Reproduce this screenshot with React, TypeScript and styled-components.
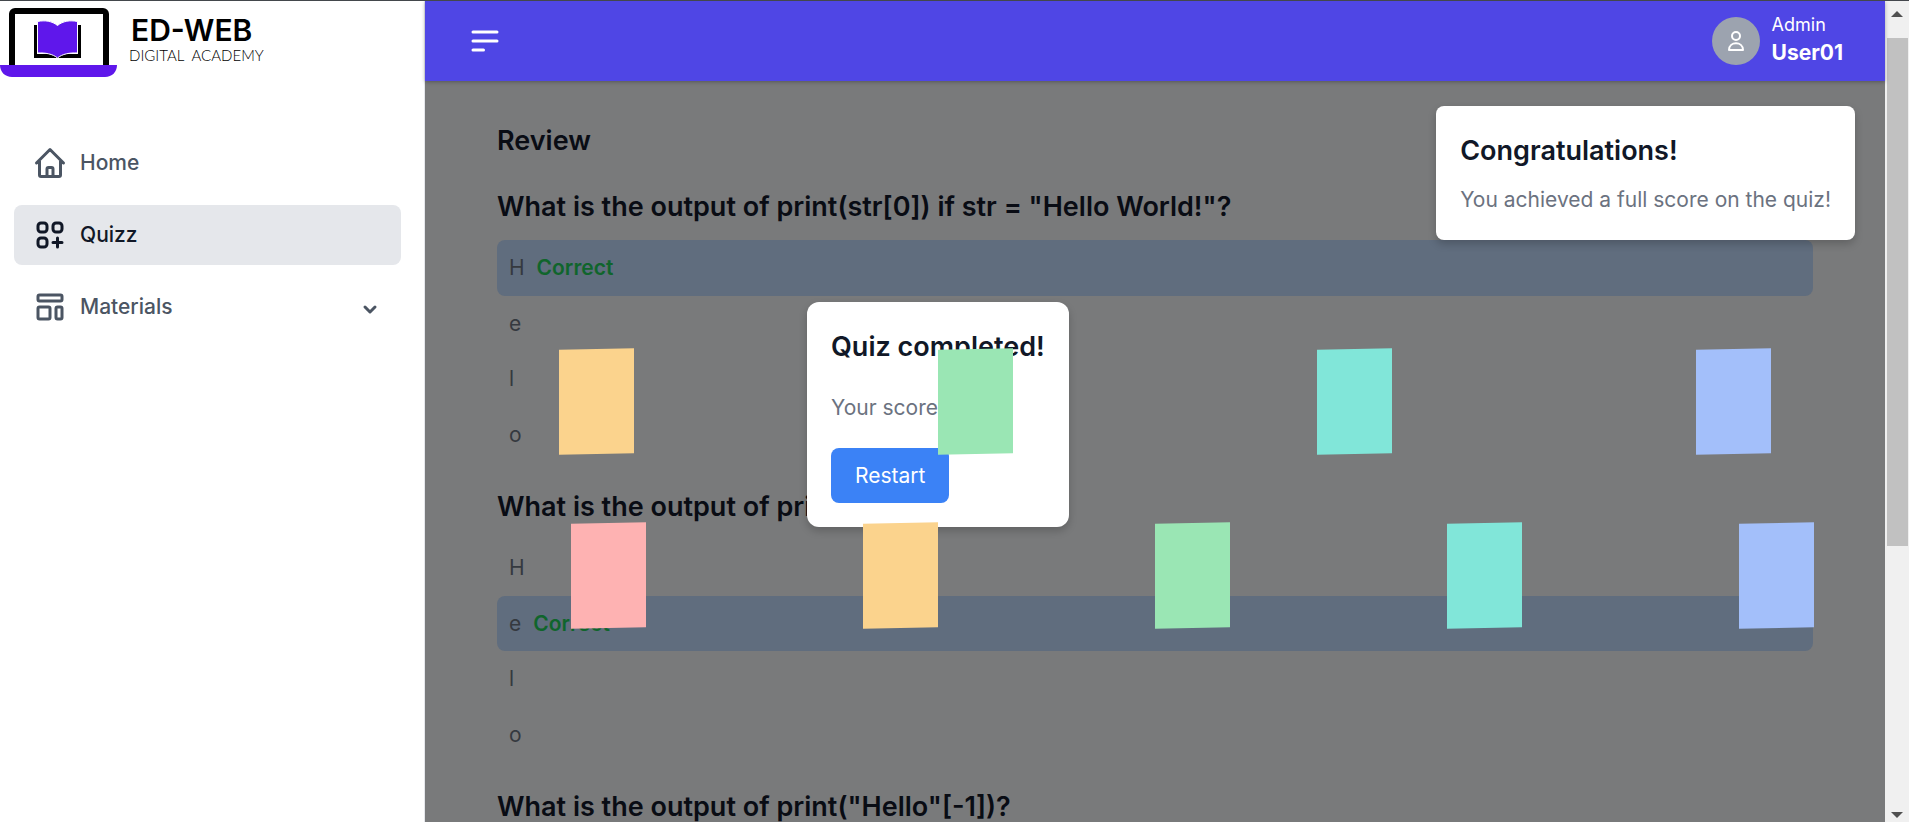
import React from "react";
import styled, { createGlobalStyle, css } from "styled-components";
import {
  HiOutlineChevronDown,
  HiOutlineHome,
  HiOutlineMenuAlt2,
  HiOutlineTemplate,
  HiOutlineViewGridAdd,
} from "react-icons/hi";

const GlobalStyle = createGlobalStyle`
  *, *::before, *::after { box-sizing: border-box; }
  body { margin: 0; background: #f3f4f6; font-family: Inter, "Liberation Sans", sans-serif; }
  h1, h2, h3, p, ul { margin: 0; padding: 0; font-weight: inherit; }
  button { font: inherit; border: 0; padding: 0; background: none; cursor: pointer; }
`;

const Shell = styled.div`
  display: flex;
  height: 100vh;
  overflow: hidden;
  border-top: 1px solid #43474c;
`;

const Sidebar = styled.aside`
  flex: 0 0 425px;
  background: #fff;
  border-right: 1px solid #e5e7eb;
`;

const Brand = styled.a`
  display: flex;
  align-items: flex-start;
  gap: 12px;
  height: 80px;
  padding-top: 5px;
  color: #000;
  text-decoration: none;
`;

const BrandText = styled.div`
  display: flex;
  flex-direction: column;
  padding-top: 6px;
`;

const BrandName = styled.span`
  padding-left: 2px;
  font-size: 30px;
  line-height: 36px;
  font-weight: 600;
`;

const BrandTag = styled.span`
  font-family: Lato, Inter, sans-serif;
  font-size: 15px;
  font-weight: 300;
  line-height: 14px;
  white-space: pre;
`;

const Nav = styled.nav`
  display: flex;
  flex-direction: column;
  gap: 12px;
  padding: 52px 23px 0 14px;
`;

const navItem = css<{ $active?: boolean }>`
  display: flex;
  align-items: center;
  gap: 12px;
  width: 100%;
  height: 60px;
  padding: 0 21px 0 18px;
  border-radius: 8px;
  font-size: 21px;
  line-height: 28px;
  font-weight: 500;
  text-align: left;
  text-decoration: none;
  background: ${(p) => (p.$active ? "#e5e7eb" : "transparent")};
  color: ${(p) => (p.$active ? "#111827" : "#4b5563")};
`;

const NavLink = styled.a<{ $active?: boolean }>`
  ${navItem}
`;

const NavToggle = styled.button<{ $active?: boolean }>`
  ${navItem}
`;

const NavLabel = styled.span`
  flex: 1;
`;

const Stage = styled.div`
  position: relative;
  flex: 1;
  min-width: 0;
  display: flex;
  flex-direction: column;
  background: #797a7b;
`;

const Header = styled.header`
  flex: none;
  display: flex;
  align-items: center;
  justify-content: space-between;
  height: 80px;
  padding: 0 42px;
  background: #4f46e5;
  color: #fff;
  box-shadow: 0 1px 4px rgba(0, 0, 0, 0.3);
`;

const MenuButton = styled.button`
  display: flex;
  color: #fff;
`;

const Profile = styled.div`
  display: flex;
  align-items: center;
  gap: 12px;
`;

const Avatar = styled.span`
  display: flex;
  align-items: center;
  justify-content: center;
  width: 48px;
  height: 48px;
  border-radius: 50%;
  background: #9ca3af;
`;

const ProfileText = styled.div`
  display: flex;
  flex-direction: column;
  padding-bottom: 4px;
  line-height: 28px;
`;

const Role = styled.span`
  font-size: 18px;
`;

const UserName = styled.span`
  font-size: 21px;
  font-weight: 700;
`;

const Review = styled.main`
  flex: 1;
  min-height: 0;
  overflow: hidden;
  padding: 39px 72px 0;
`;

const Heading = styled.h1`
  font-size: 27px;
  line-height: 42px;
  font-weight: 600;
  color: #090c14;
`;

const Question = styled.section`
  padding-top: 24px;
`;

const Prompt = styled(Heading).attrs({ as: "h2" })`
  margin-bottom: 12px;
`;

const Answers = styled.ul`
  display: grid;
  grid-template-rows: repeat(4, 1fr);
  height: 222px;
  list-style: none;
`;

const Answer = styled.li<{ $correct?: boolean }>`
  display: flex;
  align-items: center;
  gap: 12px;
  padding: 0 12px;
  border-radius: 8px;
  font-size: 21px;
  color: #35393f;
  background: ${(p) => (p.$correct ? "#606d7e" : "transparent")};
`;

const Verdict = styled.span`
  font-weight: 600;
  color: #10652c;
`;

const Card = styled.section`
  border-radius: 8px;
  background: #fff;
  color: #6b7280;
  font-size: 21px;
  line-height: 32px;
  box-shadow: 0 4px 8px rgba(0, 0, 0, 0.2);
  white-space: nowrap;
`;

const CardTitle = styled(Heading).attrs({ as: "h2" })`
  color: #111827;
`;

const Toast = styled(Card)`
  position: absolute;
  top: 105px;
  right: 30px;
  padding: 24px;
  display: grid;
  gap: 12px;
`;

const Overlay = styled.div`
  position: absolute;
  inset: 0;
  display: flex;
  align-items: flex-start;
  padding: 301px 0 0 382px;
`;

const Dialog = styled(Card)`
  display: grid;
  justify-items: start;
  gap: 24px;
  padding: 24px;
  border-radius: 12px;
`;

const Restart = styled.button`
  height: 55px;
  padding: 0 24px;
  border-radius: 8px;
  background: #3b82f6;
  color: #fff;
`;

const Confetti = styled.div`
  position: absolute;
  inset: 0;
  padding-top: 348px;
  display: flex;
  flex-direction: column;
  gap: 69px;
  pointer-events: none;
`;

const ConfettiRow = styled.div<{ $left: number; $right: number }>`
  display: flex;
  justify-content: space-between;
  padding: 0 ${(p) => p.$right}px 0 ${(p) => p.$left}px;
`;

const Piece = styled.span<{ $color: string }>`
  width: 75px;
  height: 105px;
  transform: skewY(-1deg);
  background: ${(p) => p.$color};
`;

const ScrollTrack = styled.div`
  flex: 0 0 24px;
  display: flex;
  flex-direction: column;
  align-items: center;
  justify-content: space-between;
  padding: 10px 0 4px;
  background: #f0f0f0;
`;

const ScrollThumb = styled.div`
  width: 21px;
  flex: 0 0 63%;
  margin: 21px 0 auto;
  background: #c1c1c1;
`;

const Logo = () => (
  <svg width="117" height="72" viewBox="0 0 117 72" aria-hidden="true">
    <rect x="12" y="5" width="94" height="60" rx="3" fill="#fff" stroke="#000" strokeWidth="6" />
    <path d="M0 59H117C117 66 112 71 105 71H12C5 71 0 66 0 59Z" fill="#5f17eb" />
    <path d="M34 19V52H81V19H78V48H37V19Z" fill="#000" />
    <path
      d="M37.500 15.500C45 14 52 15 57.500 19.500C63 15 70 14 77.500 15.500V47C70 46.500 62 48 57.500 52C53 48 45 46.500 37.500 47Z"
      fill="#5f17eb"
      stroke="#fff"
      strokeWidth="1"
    />
  </svg>
);

const CORAL = "#feb2b2";
const AMBER = "#fbd38d";
const GREEN = "#9ae6b4";
const TEAL = "#81e6d9";
const INDIGO = "#a3bffa";

const confetti = [
  { left: 134, right: 114, colors: [AMBER, GREEN, TEAL, INDIGO] },
  { left: 146, right: 71, colors: [CORAL, AMBER, GREEN, TEAL, INDIGO] },
];

type QuizQuestion = { text: string; answers?: string[]; correct?: number };

const questions: QuizQuestion[] = [
  { text: 'What is the output of print(str[0]) if str = "Hello World!"?', answers: ["H", "e", "l", "o"], correct: 0 },
  { text: 'What is the output of print("Hello"[1])?', answers: ["H", "e", "l", "o"], correct: 1 },
  { text: 'What is the output of print("Hello"[-1])?' },
];

export default function App() {
  return (
    <>
      <GlobalStyle />
      <Shell>
        <Sidebar>
          <Brand href="#">
            <Logo />
            <BrandText>
              <BrandName>ED-WEB</BrandName>
              <BrandTag>{"DIGITAL  ACADEMY"}</BrandTag>
            </BrandText>
          </Brand>
          <Nav>
            <NavLink href="#home">
              <HiOutlineHome size={36} />
              <NavLabel>Home</NavLabel>
            </NavLink>
            <NavLink href="#quizz" $active>
              <HiOutlineViewGridAdd size={36} />
              <NavLabel>Quizz</NavLabel>
            </NavLink>
            <NavToggle type="button">
              <HiOutlineTemplate size={36} />
              <NavLabel>Materials</NavLabel>
              <svg width="20" height="20" viewBox="0 0 20 20" fill="none" stroke="currentColor" strokeWidth="3" strokeLinecap="round" strokeLinejoin="round" aria-hidden="true">
                <path d="M5 10L10 15L15 10" />
              </svg>
            </NavToggle>
          </Nav>
        </Sidebar>

        <Stage>
          <Header>
            <MenuButton type="button" aria-label="Toggle menu">
              <HiOutlineMenuAlt2 size={36} />
            </MenuButton>
            <Profile>
              <Avatar>
                <svg width="16" height="20" viewBox="0 0 16 20" fill="none" stroke="#fff" strokeWidth="2" strokeLinejoin="round">
                  <circle cx="8" cy="5" r="4" />
                  <path d="M1 19C1 10 15 10 15 19Z" />
                </svg>
              </Avatar>
              <ProfileText>
                <Role>Admin</Role>
                <UserName>User01</UserName>
              </ProfileText>
            </Profile>
          </Header>

          <Review>
            <Heading>Review</Heading>
            {questions.map((q) => (
              <Question key={q.text}>
                <Prompt>{q.text}</Prompt>
                {q.answers && (
                  <Answers>
                    {q.answers.map((a, i) => (
                      <Answer key={a} $correct={i === q.correct}>
                        {a}
                        {i === q.correct && <Verdict>Correct</Verdict>}
                      </Answer>
                    ))}
                  </Answers>
                )}
              </Question>
            ))}
          </Review>

          <Overlay>
            <Dialog role="dialog" aria-label="Quiz completed!">
              <CardTitle>Quiz completed!</CardTitle>
              <p>Your score: 5/5</p>
              <Restart type="button">Restart</Restart>
            </Dialog>
          </Overlay>

          <Toast role="status">
            <CardTitle>Congratulations!</CardTitle>
            <p>You achieved a full score on the quiz!</p>
          </Toast>

          <Confetti aria-hidden="true">
            {confetti.map((row) => (
              <ConfettiRow key={row.left} $left={row.left} $right={row.right}>
                {row.colors.map((c) => (
                  <Piece key={c} $color={c} />
                ))}
              </ConfettiRow>
            ))}
          </Confetti>
        </Stage>

        <ScrollTrack aria-hidden="true">
          <svg width="12" height="6" viewBox="0 0 12 6"><path d="M0 6L6 0L12 6Z" fill="#505050" /></svg>
          <ScrollThumb />
          <svg width="12" height="6" viewBox="0 0 12 6"><path d="M0 0L6 6L12 0Z" fill="#505050" /></svg>
        </ScrollTrack>
      </Shell>
    </>
  );
}
